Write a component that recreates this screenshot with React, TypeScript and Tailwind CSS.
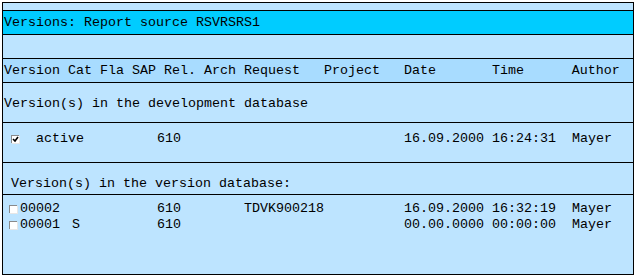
type Version = {
  id: string;
  cat: string;
  rel: string;
  request: string;
  date: string;
  time: string;
  author: string;
};

const versions: Version[] = [
  { id: "00002", cat: "", rel: "610", request: "TDVK900218", date: "16.09.2000", time: "16:32:19", author: "Mayer" },
  { id: "00001", cat: "S", rel: "610", request: "", date: "00.00.0000", time: "00:00:00", author: "Mayer" },
];

function CheckBox({ checked }: { checked?: boolean }) {
  return (
    <span className="relative block w-[8px] h-[8px] bg-white border-t border-l border-[#8a8a8a] shadow-[1px_1px_0_#e6e6e6]">
      {checked && (
        <svg viewBox="0 0 7 7" className="absolute left-0 top-0 w-[7px] h-[7px]">
          <path d="M1 3 L3 5 L6 1" stroke="#000" strokeWidth="1.6" fill="none" />
        </svg>
      )}
    </span>
  );
}

function DataRow({ v }: { v: Version }) {
  return (
    <div className="flex items-center h-[16px] whitespace-pre">
      <div className="w-[17px] pl-[6px]">
        <CheckBox />
      </div>
      <span className="w-[52px]">{v.id}</span>
      <span className="w-[85px]">{v.cat}</span>
      <span className="w-[87px]">{v.rel}</span>
      <span className="w-[160px]">{v.request}</span>
      <span className="w-[88px]">{v.date}</span>
      <span className="w-[80px]">{v.time}</span>
      <span>{v.author}</span>
    </div>
  );
}

export default function App() {
  return (
    <div className="bg-white p-[2px] w-[637px] h-[277px] font-mono text-[13.33px] leading-[16px] text-black">
      <div className="w-[632px] h-[273px] border border-black bg-[#bde4ff] flex flex-col">
        <div className="h-[8px] border-b border-black" />

        {/* title */}
        <div className="h-[24px] bg-[#00ccff] border-b border-black flex items-center pt-[1px] pl-[1px] whitespace-pre">
          Versions: Report source RSVRSRS1
        </div>

        <div className="h-[24px] border-b border-black" />

        {/* column header */}
        <div className="h-[24px] bg-[#a8dcff] border-b border-black flex items-center pt-[1px] pl-[1px] whitespace-pre">
          {"Version Cat Fla SAP Rel. Arch Request   Project   Date       Time      Author"}
        </div>

        {/* development database */}
        <div className="h-[40px] border-b border-black pt-[13px] pl-[1px] whitespace-pre">
          Version(s) in the development database
        </div>

        <div className="h-[40px] border-b border-black pt-[8px]">
          <div className="flex items-center h-[16px] whitespace-pre">
            <div className="w-[33px] pl-[8px]">
              <CheckBox checked />
            </div>
            <span className="w-[121px]">active</span>
            <span className="w-[247px]">610</span>
            <span className="w-[88px]">16.09.2000</span>
            <span className="w-[80px]">16:24:31</span>
            <span>Mayer</span>
          </div>
        </div>

        {/* version database */}
        <div className="h-[32px] border-b border-black pt-[13px] pl-[8px] whitespace-pre">
          Version(s) in the version database:
        </div>

        <div className="pt-[6px]">
          {versions.map((v) => (
            <DataRow key={v.id} v={v} />
          ))}
        </div>
      </div>
    </div>
  );
}
